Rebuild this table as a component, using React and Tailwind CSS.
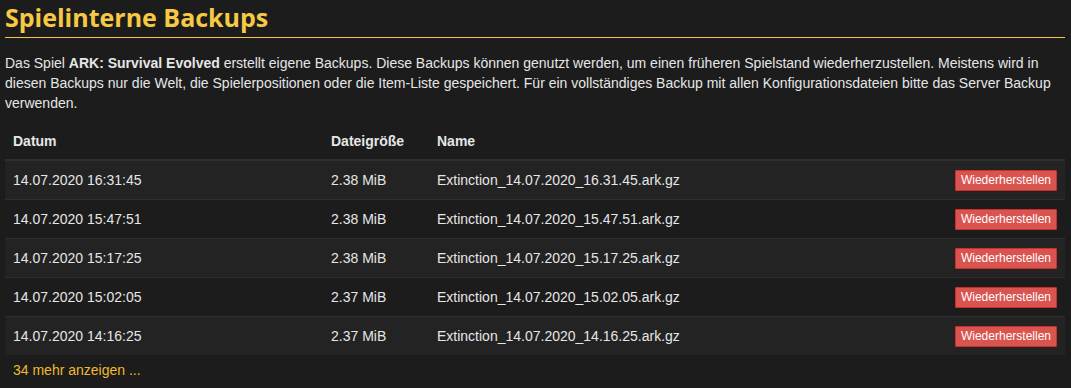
const rows = [
  ["14.07.2020 16:31:45", "2.38 MiB", "Extinction_14.07.2020_16.31.45.ark.gz"],
  ["14.07.2020 15:47:51", "2.38 MiB", "Extinction_14.07.2020_15.47.51.ark.gz"],
  ["14.07.2020 15:17:25", "2.38 MiB", "Extinction_14.07.2020_15.17.25.ark.gz"],
  ["14.07.2020 15:02:05", "2.37 MiB", "Extinction_14.07.2020_15.02.05.ark.gz"],
  ["14.07.2020 14:16:25", "2.37 MiB", "Extinction_14.07.2020_14.16.25.ark.gz"],
];

export default function App() {
  return (
    <div className="min-h-screen bg-[#1c1c1c] px-[5px] pr-[6px] text-[14px] leading-[20px] text-[#e6e6e6] font-['Liberation_Sans',Arial,sans-serif]">
      <h1 className="border-b border-[#f6c945] pb-[3px] pt-[1px] text-[25px] leading-[33px] font-bold text-[#f6c945] font-['Open_Sans',sans-serif]">
        Spielinterne Backups
      </h1>

      <p className="mt-[15px] pr-[8px]">
        Das Spiel <b>ARK: Survival Evolved</b> erstellt eigene Backups. Diese Backups können genutzt werden, um einen früheren Spielstand wiederherzustellen. Meistens wird in diesen Backups nur die Welt, die Spielerpositionen oder die Item-Liste gespeichert. Für ein vollständiges Backup mit allen Konfigurationsdateien bitte das Server Backup verwenden.
      </p>

      <table className="mt-[10px] w-full border-collapse">
        <thead>
          <tr className="border-b-2 border-[#2e2e2e] text-left">
            <th className="w-[318px] px-[8px] py-[8px] font-bold">Datum</th>
            <th className="w-[106px] px-[8px] py-[8px] font-bold">Dateigröße</th>
            <th className="px-[8px] py-[8px] font-bold">Name</th>
            <th className="px-[8px] py-[8px]"></th>
          </tr>
        </thead>
        <tbody>
          {rows.map((r, i) => (
            <tr
              key={r[2]}
              className={`border-t border-[#2e2e2e] ${i % 2 === 0 ? "bg-[#232323]" : "bg-[#1c1c1c]"}`}
            >
              <td className="px-[8px] py-[9px] align-middle">{r[0]}</td>
              <td className="px-[8px] py-[9px] align-middle">{r[1]}</td>
              <td className="px-[8px] py-[9px] align-middle">{r[2]}</td>
              <td className="px-[8px] py-[9px] align-middle">
                <div className="flex h-[20px] items-center justify-end">
                  <button className="h-[21px] rounded-[1px] border border-[#c9302c] bg-[#d9534f] px-[5px] text-[12px] leading-[18px] text-white">
                    Wiederherstellen
                  </button>
                </div>
              </td>
            </tr>
          ))}
        </tbody>
      </table>

      <a href="#" className="mt-[5px] ml-[8px] inline-block text-[#efb92e]">
        34 mehr anzeigen ...
      </a>
    </div>
  );
}
